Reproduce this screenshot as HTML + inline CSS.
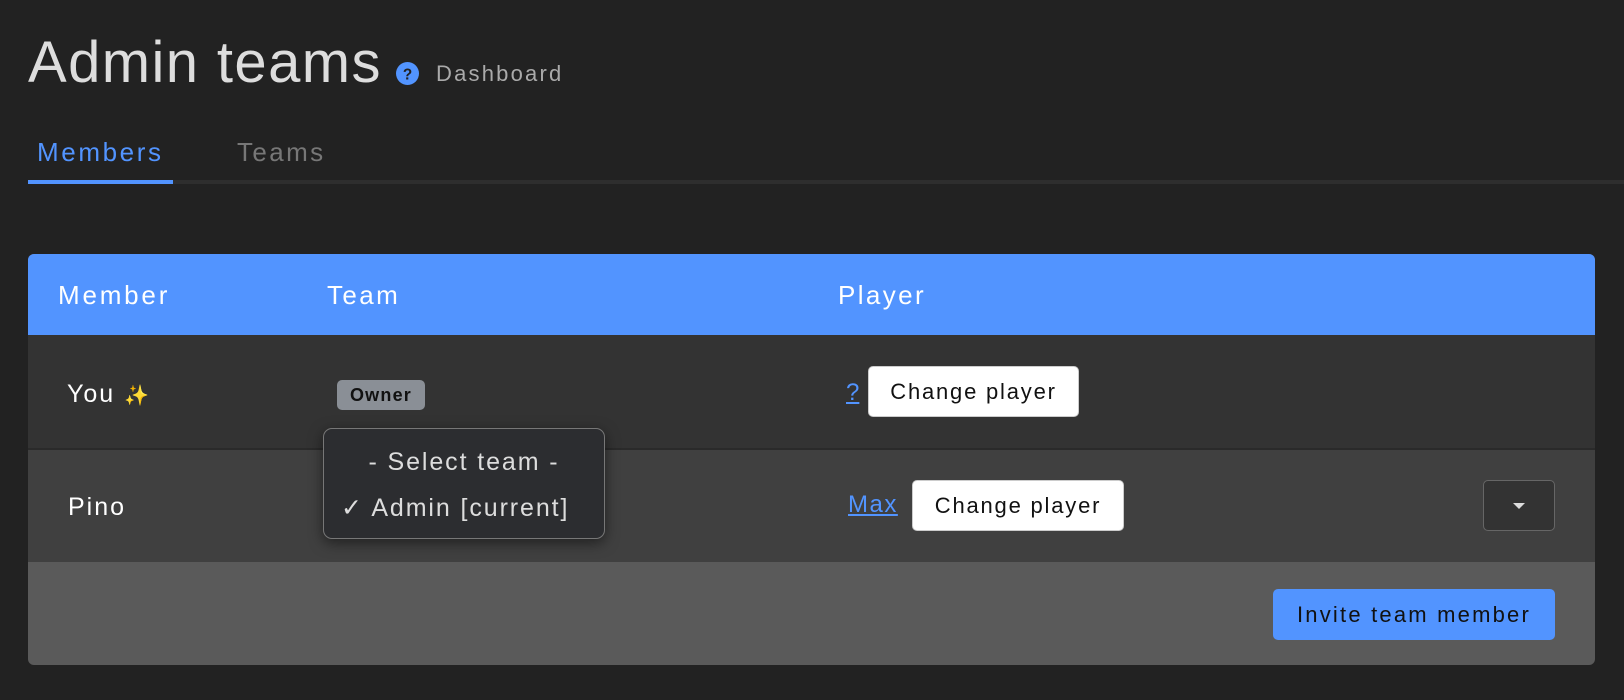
<!DOCTYPE html>
<html><head><meta charset="utf-8"><style>
*{box-sizing:border-box;margin:0;padding:0}
body{width:1624px;height:700px;background:#222;font-family:"Liberation Sans",sans-serif;position:relative;overflow:hidden;color:#fff}
.a{position:absolute;white-space:nowrap}
.btn{position:absolute;background:#fff;color:#111;border-radius:5px;border:1px solid #ccc;font-size:22px;letter-spacing:1.8px;display:flex;align-items:center;justify-content:center}
</style></head><body>
<div class="a" style="left:28px;top:28px;font-size:58px;color:#ddd;line-height:70px;letter-spacing:1.4px">Admin teams</div>
<svg class="a" style="left:396px;top:62px" width="23" height="23" viewBox="0 0 24 24"><circle cx="12" cy="12" r="12" fill="#5294ff"/><text x="12" y="18" text-anchor="middle" font-family="Liberation Sans" font-weight="bold" font-size="16" fill="#222">?</text></svg>
<div class="a" style="left:436px;top:61px;font-size:22px;color:#aaa;line-height:26px;letter-spacing:2.2px">Dashboard</div>
<div class="a" style="left:37px;top:136px;font-size:26px;color:#5294ff;line-height:32px;letter-spacing:2.6px">Members</div>
<div class="a" style="left:237px;top:136px;font-size:26px;color:#777;line-height:32px;letter-spacing:2.4px">Teams</div>
<div class="a" style="left:28px;top:180px;width:1596px;height:4px;background:#2e2e2e"></div>
<div class="a" style="left:28px;top:180px;width:145px;height:4px;background:#5294ff"></div>

<div class="a" style="left:28px;top:254px;width:1567px;height:411px;border-radius:6px;overflow:hidden;background:#5a5a5a">
 <div class="a" style="left:0;top:0;width:100%;height:81px;background:#5294ff"></div>
 <div class="a" style="left:0;top:81px;width:100%;height:113px;background:#333"></div>
 <div class="a" style="left:0;top:194px;width:100%;height:2px;background:#2a2a2a"></div>
 <div class="a" style="left:0;top:196px;width:100%;height:112px;background:#404040"></div>
</div>
<div class="a" style="left:58px;top:279px;font-size:26px;line-height:32px;letter-spacing:2.8px">Member</div>
<div class="a" style="left:327px;top:279px;font-size:26px;line-height:32px;letter-spacing:2.4px">Team</div>
<div class="a" style="left:838px;top:279px;font-size:26px;line-height:32px;letter-spacing:2.4px">Player</div>

<div class="a" style="left:67px;top:379px;font-size:25px;line-height:30px;letter-spacing:2px">You <span style="color:#f5c542;font-size:20px">✨</span></div>
<div class="a" style="left:337px;top:380px;width:88px;height:30px;background:#8a8f96;border-radius:5px;color:#111;font-size:18px;font-weight:bold;letter-spacing:1.2px;display:flex;align-items:center;justify-content:center">Owner</div>
<div class="a" style="left:846px;top:378px;font-size:24px;color:#5294ff;text-decoration:underline;line-height:30px">?</div>
<div class="btn" style="left:868px;top:366px;width:211px;height:51px">Change player</div>

<div class="a" style="left:68px;top:492px;font-size:25px;line-height:30px;letter-spacing:2px">Pino</div>
<div class="a" style="left:848px;top:490px;font-size:24px;color:#5294ff;text-decoration:underline;line-height:30px;letter-spacing:1.5px">Max</div>
<div class="btn" style="left:912px;top:480px;width:212px;height:51px">Change player</div>
<div class="a" style="left:1483px;top:480px;width:72px;height:51px;border:1px solid #666;border-radius:5px;background:#333"></div>
<div class="a" style="left:1513px;top:503px;width:0;height:0;border-left:6px solid transparent;border-right:6px solid transparent;border-top:6px solid #ddd"></div>

<div class="a" style="left:1273px;top:589px;width:282px;height:51px;background:#5294ff;border-radius:5px;color:#111;font-size:22px;letter-spacing:2.2px;display:flex;align-items:center;justify-content:center">Invite team member</div>

<div class="a" style="left:323px;top:428px;width:282px;height:111px;background:#2c2d30;border:1px solid #777;border-radius:9px;box-shadow:0 4px 14px rgba(0,0,0,.5)"></div>
<div class="a" style="left:323px;top:447px;width:282px;text-align:center;font-size:25px;color:#ddd;line-height:30px;letter-spacing:1.9px">- Select team -</div>
<div class="a" style="left:341px;top:493px;font-size:25px;color:#ddd;line-height:30px;letter-spacing:1.9px">✓ Admin [current]</div>
</body></html>
